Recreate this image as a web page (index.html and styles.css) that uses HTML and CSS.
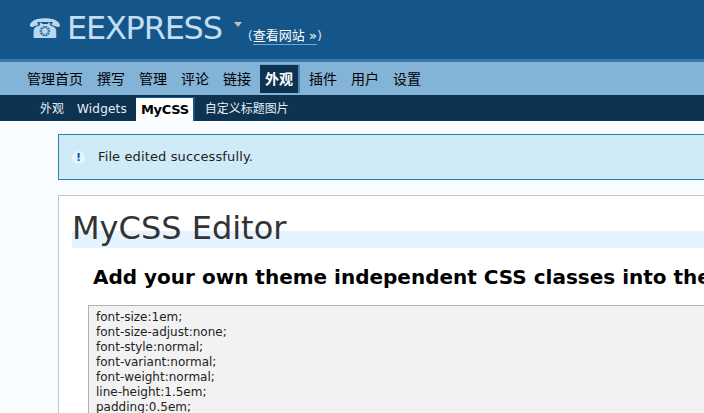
FILE: index.html
```html
<!DOCTYPE html>
<html lang="zh">
<head>
<meta charset="utf-8">
<title>MyCSS Editor</title>
<link rel="stylesheet" href="styles.css">
</head>
<body>
<header class="site-head">
  <span class="phone">☎</span>
  <h1 class="site-name">EEXPRESS</h1>
  <span class="caret"></span>
  <span class="view-site">(<a href="#">查看网站 »</a>)</span>
</header>
<nav class="main-nav">
  <a href="#">管理首页</a>
  <a href="#">撰写</a>
  <a href="#">管理</a>
  <a href="#">评论</a>
  <a href="#">链接</a>
  <a href="#" class="current">外观</a>
  <a href="#">插件</a>
  <a href="#">用户</a>
  <a href="#">设置</a>
</nav>
<nav class="sub-nav">
  <a href="#">外观</a>
  <a href="#" class="latin">Widgets</a>
  <a href="#" class="current">MyCSS</a>
  <a href="#">自定义标题图片</a>
</nav>
<main class="content">
  <div class="notice">
    <span class="bang">!</span>
    <p>File edited successfully.</p>
  </div>
  <section class="wrap">
    <h2 class="title">MyCSS Editor</h2>
    <h3 class="lead">Add your own theme independent CSS classes into the</h3>
    <div class="code">
      <div>font-size:1em;</div>
      <div>font-size-adjust:none;</div>
      <div>font-style:normal;</div>
      <div>font-variant:normal;</div>
      <div>font-weight:normal;</div>
      <div>line-height:1.5em;</div>
      <div>padding:0.5em;</div>
    </div>
  </section>
</main>
</body>
</html>
```
FILE: styles.css
```css
html, body {
  margin: 0;
  height: 413px;
  overflow: hidden;
}
body {
  background: #f9fcff;
  font-family: "DejaVu Sans", "Noto Sans CJK SC", sans-serif;
  color: #000;
  width: 704px;
}
a { text-decoration: none; color: inherit; }

.site-head {
  box-sizing: border-box;
  height: 62px;
  background: #14568a;
  border-bottom: 3px solid #3a78a9;
  display: flex;
  align-items: flex-start;
  padding-left: 28px;
  white-space: nowrap;
}
.phone {
  font-size: 27px;
  line-height: 36px;
  color: #b9d8f0;
  margin-top: 11px;
  width: 31px;
}
.site-name {
  margin: 8px 0 0 8px;
  font-size: 32px;
  line-height: 40px;
  font-weight: 400;
  color: #c3def1;
  letter-spacing: -1.25px;
}
.caret {
  width: 0;
  height: 0;
  margin: 22px 0 0 12px;
  border-left: 4px solid transparent;
  border-right: 4px solid transparent;
  border-top: 5px solid #c9c0ad;
}
.view-site {
  margin: 28px 0 0 6px;
  font-size: 13px;
  line-height: 16px;
  color: #c3def1;
}
.view-site a {
  color: #fff;
  border-bottom: 1px solid #69a8d8;
  padding-bottom: 1px;
}

.main-nav {
  box-sizing: border-box;
  height: 33px;
  background: #83b4d8;
  display: flex;
  align-items: flex-start;
  padding: 3px 0 0 22px;
  column-gap: 4px;
  font-size: 14px;
  line-height: 28px;
  color: #000;
}
.main-nav a {
  padding: 0 5px;
  height: 28px;
}
.main-nav a.current {
  background: #0e3350;
  color: #fff;
  font-weight: 700;
  border-right: 2px solid #4a88bb;
  border-top: 1px solid #6fa3cc;
  height: 28px;
  margin-top: -1px;
}

.sub-nav {
  box-sizing: border-box;
  height: 26px;
  background: #0e3350;
  display: flex;
  align-items: flex-start;
  padding: 3px 0 0 34px;
  font-size: 12px;
  line-height: 23px;
  color: #e6eef5;
}
.sub-nav a {
  padding: 0 6px;
  height: 23px;
  margin-right: 1px;
}
.sub-nav a.latin {
  letter-spacing: 0.2px;
}
.sub-nav a.current {
  background: #fff;
  color: #000;
  font-weight: 700;
  font-size: 13px;
  border-top: 1px solid #14568a;
  border-right: 2px solid #14568a;
  height: 23px;
  margin-top: -1px;
  line-height: 23px;
  padding: 0 4px 0 5px;
  margin-left: 2px;
  margin-right: 4px;
  letter-spacing: -0.3px;
}

.content {
  padding: 13px 0 0 58px;
}
.notice {
  box-sizing: border-box;
  height: 46px;
  width: 700px;
  background: #cfebf7;
  border: 1px solid #2683ae;
  display: flex;
  align-items: center;
  padding-left: 13px;
  font-size: 13px;
  letter-spacing: 0.12px;
  color: #222;
}
.notice p { margin: 0 0 2px 13px; }
.bang {
  width: 13px;
  height: 13px;
  border-radius: 50%;
  background: #e4f5fd;
  color: #0b4f9e;
  font-size: 11px;
  font-weight: 700;
  line-height: 13px;
  text-align: center;
}

.wrap {
  box-sizing: border-box;
  width: 700px;
  height: 300px;
  margin-top: 15px;
  background: #fff;
  border: 1px solid #c6c6c6;
  padding: 0 0 0 13px;
  white-space: nowrap;
  overflow: hidden;
}
.title {
  margin: 13px 0 0;
  height: 39px;
  font-size: 32px;
  line-height: 39px;
  font-weight: 400;
  color: #333;
  background: linear-gradient(to bottom, transparent 22px, #e5f3ff 22px);
}
.lead {
  margin: 16px 0 0 21px;
  font-size: 20px;
  line-height: 26px;
  font-weight: 700;
  color: #000;
}
.code {
  margin: 15px 0 0 16px;
  border: 1px solid #b0b0b0;
  background: #f2f2f2;
  padding: 4px 0 0 7px;
  font-size: 12px;
  line-height: 15px;
  color: #222;
}
```
